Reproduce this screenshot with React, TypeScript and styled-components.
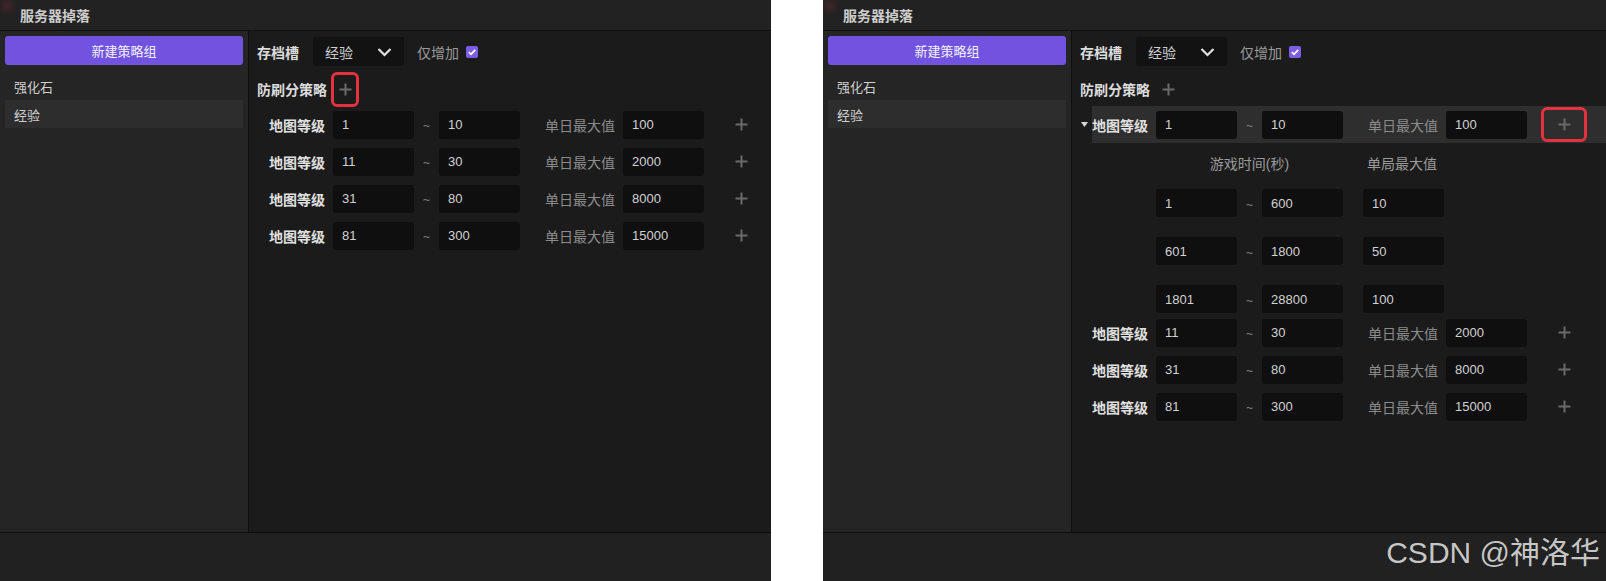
import React from 'react';
import styled, { createGlobalStyle } from 'styled-components';

type Tier = { from: string; to: string; value: string };
type Rule = {
  from: string;
  to: string;
  max: string;
  expanded?: boolean;
  marked?: boolean;
  tiers?: Tier[];
};

const baseRules: Rule[] = [
  { from: '1', to: '10', max: '100' },
  { from: '11', to: '30', max: '2000' },
  { from: '31', to: '80', max: '8000' },
  { from: '81', to: '300', max: '15000' },
];

const expandedRules: Rule[] = [
  {
    from: '1',
    to: '10',
    max: '100',
    expanded: true,
    marked: true,
    tiers: [
      { from: '1', to: '600', value: '10' },
      { from: '601', to: '1800', value: '50' },
      { from: '1801', to: '28800', value: '100' },
    ],
  },
  ...baseRules.slice(1),
];

export default function App() {
  return (
    <>
      <GlobalStyle />
      <Page>
        <DropPanel width={771} rules={baseRules} markStrategy />
        <DropPanel width={783} rules={expandedRules} />
        <Watermark>CSDN @神洛华</Watermark>
      </Page>
    </>
  );
}

function DropPanel({ width, rules, markStrategy }: { width: number; rules: Rule[]; markStrategy?: boolean }) {
  return (
    <Panel $width={width}>
      <TitleBar>服务器掉落</TitleBar>
      <Body>
        <Sidebar>
          <NewButton>新建策略组</NewButton>
          <GroupItem>强化石</GroupItem>
          <GroupItem $selected>经验</GroupItem>
        </Sidebar>
        <Main>
          <HeaderRow>
            <BoldLabel>存档槽</BoldLabel>
            <Select>
              经验
              <ChevronIcon />
            </Select>
            <CheckLabel>仅增加</CheckLabel>
            <CheckBox>
              <svg width="12" height="12" viewBox="0 0 12 12">
                <path d="M2.8 6.2 L5 8.3 L9.3 3.8" fill="none" stroke="#fff" strokeWidth="1.8" />
              </svg>
            </CheckBox>
          </HeaderRow>
          <StrategyLine>
            <BoldLabel>防刷分策略</BoldLabel>
            <PlusButton $w={28} $marked={markStrategy} $gap={4}>
              <PlusIcon />
            </PlusButton>
          </StrategyLine>
          <RuleList>
            {rules.map((r, i) => (
              <React.Fragment key={i}>
                <Row>
                  <Caret>{r.expanded && <CaretIcon />}</Caret>
                  <RowBody $active={r.expanded}>
                    <RowLabel>地图等级</RowLabel>
                    <Field>{r.from}</Field>
                    <Tilde>~</Tilde>
                    <Field>{r.to}</Field>
                    <MutedLabel>单日最大值</MutedLabel>
                    <Field>{r.max}</Field>
                    <PlusButton $w={46} $marked={r.marked} $gap={14}>
                      <PlusIcon />
                    </PlusButton>
                  </RowBody>
                </Row>
                {r.expanded && r.tiers && (
                  <TierBlock>
                    <TierHeader>
                      <TierHeadCell $w={187}>游戏时间(秒)</TierHeadCell>
                      <TierHeadCell $gap={24}>单局最大值</TierHeadCell>
                    </TierHeader>
                    <TierList>
                      {r.tiers.map((t, j) => (
                        <TierRow key={j}>
                          <Field>{t.from}</Field>
                          <Tilde>~</Tilde>
                          <Field>{t.to}</Field>
                          <Field $gap={20}>{t.value}</Field>
                        </TierRow>
                      ))}
                    </TierList>
                  </TierBlock>
                )}
              </React.Fragment>
            ))}
          </RuleList>
        </Main>
      </Body>
      <Footer />
    </Panel>
  );
}

function PlusIcon() {
  return (
    <svg width="13" height="13" viewBox="0 0 13 13">
      <path d="M6.5 0.5 V12.5 M0.5 6.5 H12.5" stroke="#6a6a6a" strokeWidth="2" />
    </svg>
  );
}

function ChevronIcon() {
  return (
    <ChevronWrap>
      <svg width="15" height="10" viewBox="0 0 15 10">
        <path d="M1.5 2 L7.5 8 L13.5 2" fill="none" stroke="#e2e2e2" strokeWidth="2.2" />
      </svg>
    </ChevronWrap>
  );
}

function CaretIcon() {
  return (
    <svg width="7" height="5" viewBox="0 0 7 5">
      <path d="M0 0 H7 L3.5 5 Z" fill="#d8d8d8" />
    </svg>
  );
}

const GlobalStyle = createGlobalStyle`
  html, body {
    margin: 0;
    padding: 0;
    background: #ffffff;
  }
  body {
    font-family: "Liberation Sans", "Noto Sans CJK SC", sans-serif;
  }
  * {
    box-sizing: border-box;
  }
`;

const Page = styled.div`
  position: relative;
  width: 1606px;
  height: 581px;
  display: flex;
  justify-content: space-between;
  overflow: hidden;
`;

const Panel = styled.div<{ $width: number }>`
  width: ${(p) => p.$width}px;
  height: 581px;
  display: flex;
  flex-direction: column;
  background: #1c1c1c;
  overflow: hidden;
`;

const TitleBar = styled.div`
  height: 31px;
  flex-shrink: 0;
  padding-left: 20px;
  display: flex;
  align-items: center;
  font-size: 14px;
  font-weight: bold;
  color: #cdcdcd;
  background:
    radial-gradient(circle at 7px 6px, rgba(170, 40, 70, 0.22), transparent 10px),
    radial-gradient(ellipse at 34px 30px, rgba(120, 30, 50, 0.14), transparent 36px),
    #222222;
  border-bottom: 1px solid #0f0f0f;
`;

const Body = styled.div`
  flex: 1;
  display: flex;
  min-height: 0;
`;

const Sidebar = styled.div`
  width: 249px;
  flex-shrink: 0;
  padding: 5px;
  background: #252525;
  border-right: 1px solid #101010;
  display: flex;
  flex-direction: column;
`;

const NewButton = styled.div`
  height: 29px;
  margin-bottom: 7px;
  border-radius: 3px;
  background: #7153df;
  color: #f4f1ff;
  font-size: 13px;
  display: flex;
  align-items: center;
  justify-content: center;
`;

const GroupItem = styled.div<{ $selected?: boolean }>`
  height: 28px;
  padding-left: 9px;
  display: flex;
  align-items: center;
  font-size: 13px;
  color: #cfcfcf;
  background: ${(p) => (p.$selected ? '#2d2d2d' : 'transparent')};
`;

const Main = styled.div`
  flex: 1;
  min-width: 0;
  padding: 6px 0 0 8px;
  background: #1b1b1b;
  display: flex;
  flex-direction: column;
`;

const HeaderRow = styled.div`
  height: 29px;
  display: flex;
  align-items: center;
`;

const BoldLabel = styled.span`
  font-size: 14px;
  font-weight: bold;
  color: #dcdcdc;
  white-space: nowrap;
`;

const Select = styled.div`
  width: 91px;
  height: 29px;
  margin-left: 14px;
  padding-left: 12px;
  border-radius: 3px;
  background: #121212;
  display: flex;
  align-items: center;
  font-size: 14px;
  color: #cfcfcf;
`;

const ChevronWrap = styled.span`
  margin-left: auto;
  margin-right: 12px;
  display: flex;
`;

const CheckLabel = styled.span`
  margin-left: 13px;
  font-size: 14px;
  color: #9a9a9a;
`;

const CheckBox = styled.span`
  width: 12px;
  height: 12px;
  margin-left: 7px;
  border-radius: 2px;
  background: #7b5de6;
  display: flex;
`;

const StrategyLine = styled.div`
  height: 34px;
  margin-top: 6px;
  display: flex;
  align-items: center;
`;

const PlusButton = styled.span<{ $w: number; $marked?: boolean; $gap?: number }>`
  width: ${(p) => p.$w}px;
  height: 35px;
  margin-left: ${(p) => p.$gap ?? 2}px;
  flex-shrink: 0;
  display: flex;
  align-items: center;
  justify-content: center;
  border-radius: 6px;
  border: 3px solid ${(p) => (p.$marked ? '#e3313f' : 'transparent')};
`;

const RuleList = styled.div`
  display: flex;
  flex-direction: column;
`;

const Row = styled.div`
  height: 37px;
  display: flex;
  align-items: center;
`;

const Caret = styled.span`
  width: 12px;
  flex-shrink: 0;
  display: flex;
  align-items: center;
  padding-left: 1px;
`;

const RowBody = styled.div<{ $active?: boolean }>`
  flex: 1;
  height: 37px;
  display: flex;
  align-items: center;
  background: ${(p) => (p.$active ? '#2e2e2e' : 'transparent')};
`;

const RowLabel = styled.span`
  width: 64px;
  flex-shrink: 0;
  font-size: 14px;
  font-weight: bold;
  color: #e0e0e0;
  white-space: nowrap;
`;

const Field = styled.div<{ $gap?: number }>`
  width: 81px;
  height: 28px;
  flex-shrink: 0;
  margin-left: ${(p) => p.$gap ?? 0}px;
  padding-left: 9px;
  border-radius: 3px;
  background: #0f0f0f;
  display: flex;
  align-items: center;
  font-size: 13px;
  color: #d2d2d2;
`;

const Tilde = styled.span`
  width: 25px;
  flex-shrink: 0;
  text-align: center;
  font-size: 12px;
  padding-top: 3px;
  color: #808080;
`;

const MutedLabel = styled.span`
  width: 78px;
  margin-left: 25px;
  flex-shrink: 0;
  font-size: 14px;
  color: #8b8b8b;
  white-space: nowrap;
`;

const TierBlock = styled.div`
  padding-left: 76px;
  padding-bottom: 1px;
  display: flex;
  flex-direction: column;
`;

const TierHeader = styled.div`
  height: 40px;
  display: flex;
  align-items: center;
`;

const TierHeadCell = styled.span<{ $w?: number; $gap?: number }>`
  ${(p) => (p.$w ? `width: ${p.$w}px; text-align: center;` : '')}
  margin-left: ${(p) => p.$gap ?? 0}px;
  font-size: 14px;
  color: #9a9a9a;
  white-space: nowrap;
`;

const TierList = styled.div`
  margin-top: 6px;
  display: flex;
  flex-direction: column;
  gap: 20px;
`;

const TierRow = styled.div`
  display: flex;
  align-items: center;
`;

const Footer = styled.div`
  height: 49px;
  flex-shrink: 0;
  background: #212121;
  border-top: 1px solid #0e0e0e;
`;

const Watermark = styled.div`
  position: absolute;
  right: 6px;
  bottom: 10px;
  font-family: "Liberation Sans", "Noto Sans CJK SC", sans-serif;
  font-size: 30px;
  line-height: 36px;
  color: rgba(222, 222, 222, 0.88);
  white-space: nowrap;
`;
